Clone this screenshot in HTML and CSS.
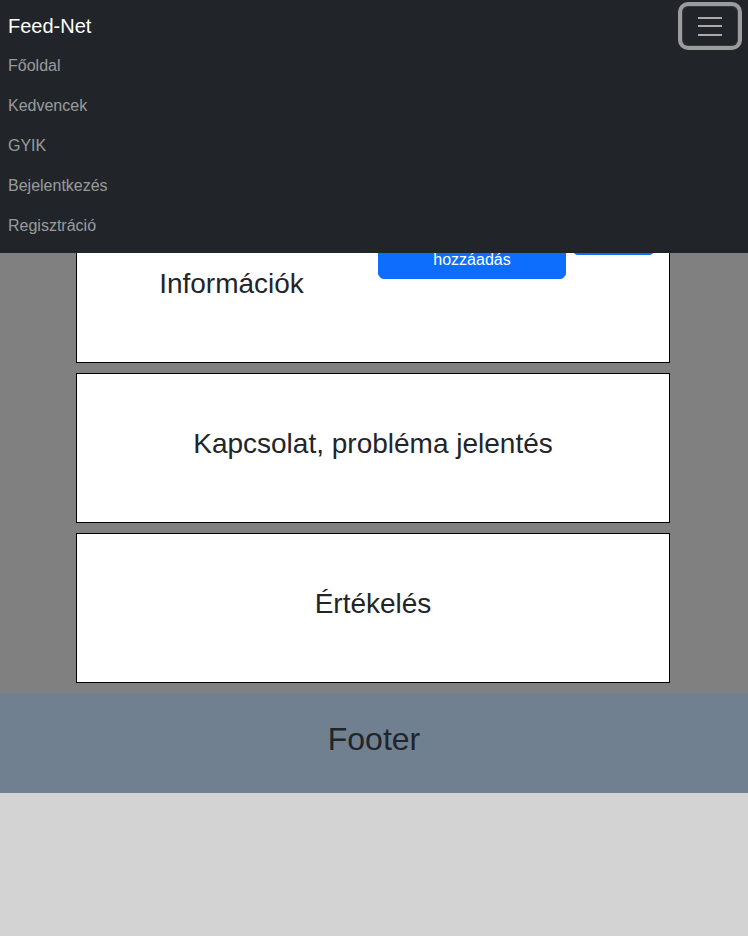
FILE: index.html
```html
<!DOCTYPE html>
<html lang="hu">
<head>
<meta charset="utf-8">
<title>Feed-Net</title>
<link rel="stylesheet" href="styles.css">
</head>
<body>
<nav class="navbar">
  <div class="navbar-top">
    <a class="brand" href="#">Feed-Net</a>
    <button class="toggler" type="button" aria-label="Menü">
      <span class="bar"></span>
      <span class="bar"></span>
      <span class="bar"></span>
    </button>
  </div>
  <ul class="nav-links">
    <li><a href="#">Főoldal</a></li>
    <li><a href="#">Kedvencek</a></li>
    <li><a href="#">GYIK</a></li>
    <li><a href="#">Bejelentkezés</a></li>
    <li><a href="#">Regisztráció</a></li>
  </ul>
</nav>
<main class="main">
  <section class="card card-info">
    <h2 class="card-title title-info">Információk</h2>
    <div class="actions">
      <button class="btn btn-add" type="button">Kedvencekhez hozzáadás</button>
      <button class="btn btn-back" type="button">Vissza</button>
    </div>
  </section>
  <section class="card">
    <h2 class="card-title">Kapcsolat, probléma jelentés</h2>
  </section>
  <section class="card">
    <h2 class="card-title">Értékelés</h2>
  </section>
</main>
<footer class="footer">
  <h2 class="footer-title">Footer</h2>
</footer>
</body>
</html>
```
FILE: styles.css
```css
* { box-sizing: border-box; }

html, body {
  margin: 0;
  padding: 0;
}

body {
  background: #d3d3d3;
  font-family: "Liberation Sans", Arial, sans-serif;
  font-size: 16px;
  line-height: 1.5;
  color: #212529;
}

.navbar {
  position: fixed;
  top: 0;
  left: 0;
  right: 0;
  z-index: 10;
  background: #212529;
  padding: 6px 10px 7px 8px;
}

.navbar-top {
  display: flex;
  justify-content: space-between;
  align-items: center;
  height: 40px;
}

.brand {
  font-size: 20px;
  line-height: 30px;
  color: #fff;
  text-decoration: none;
}

.toggler {
  width: 56px;
  height: 40px;
  padding: 0;
  background: transparent;
  border: 1px solid rgba(255, 255, 255, 0.1);
  border-radius: 6px;
  box-shadow: 0 0 0 4px #9b9c9e;
  display: flex;
  flex-direction: column;
  align-items: center;
  justify-content: center;
  gap: 6.5px;
}

.bar {
  display: block;
  width: 24px;
  height: 2px;
  background: #a9aaac;
}

.nav-links {
  list-style: none;
  margin: 0;
  padding: 0;
}

.nav-links a {
  display: block;
  padding: 8px 0;
  color: rgba(255, 255, 255, 0.55);
  text-decoration: none;
}

.main {
  background: #808080;
  padding: 213px 78px 10px 76px;
  display: flex;
  flex-direction: column;
  gap: 10px;
}

.card {
  height: 150px;
  background: #fff;
  border: 1px solid #000;
  display: flex;
  align-items: center;
  justify-content: center;
}

.card-title {
  margin: 0 0 8px;
  font-size: 28px;
  font-weight: 500;
  line-height: 1.2;
  text-align: center;
}

.card-info {
  justify-content: flex-start;
}

.title-info {
  width: 301px;
  padding-left: 8px;
  flex: none;
}

.actions {
  align-self: flex-start;
  margin-top: 3px;
  display: flex;
  align-items: flex-start;
  gap: 6px;
}

.btn {
  font-family: inherit;
  font-size: 16px;
  line-height: 24px;
  color: #fff;
  background: #0d6efd;
  border: 1px solid #0d6efd;
  border-radius: 6px;
  padding: 6px 12px;
  text-align: center;
}

.btn-add { width: 188px; }
.btn-back { width: 83px; }

.footer {
  background: #708090;
  height: 100px;
  display: flex;
  align-items: center;
  justify-content: center;
}

.footer-title {
  margin: 0 0 8px;
  font-size: 32px;
  font-weight: 500;
  line-height: 1.2;
}
```
